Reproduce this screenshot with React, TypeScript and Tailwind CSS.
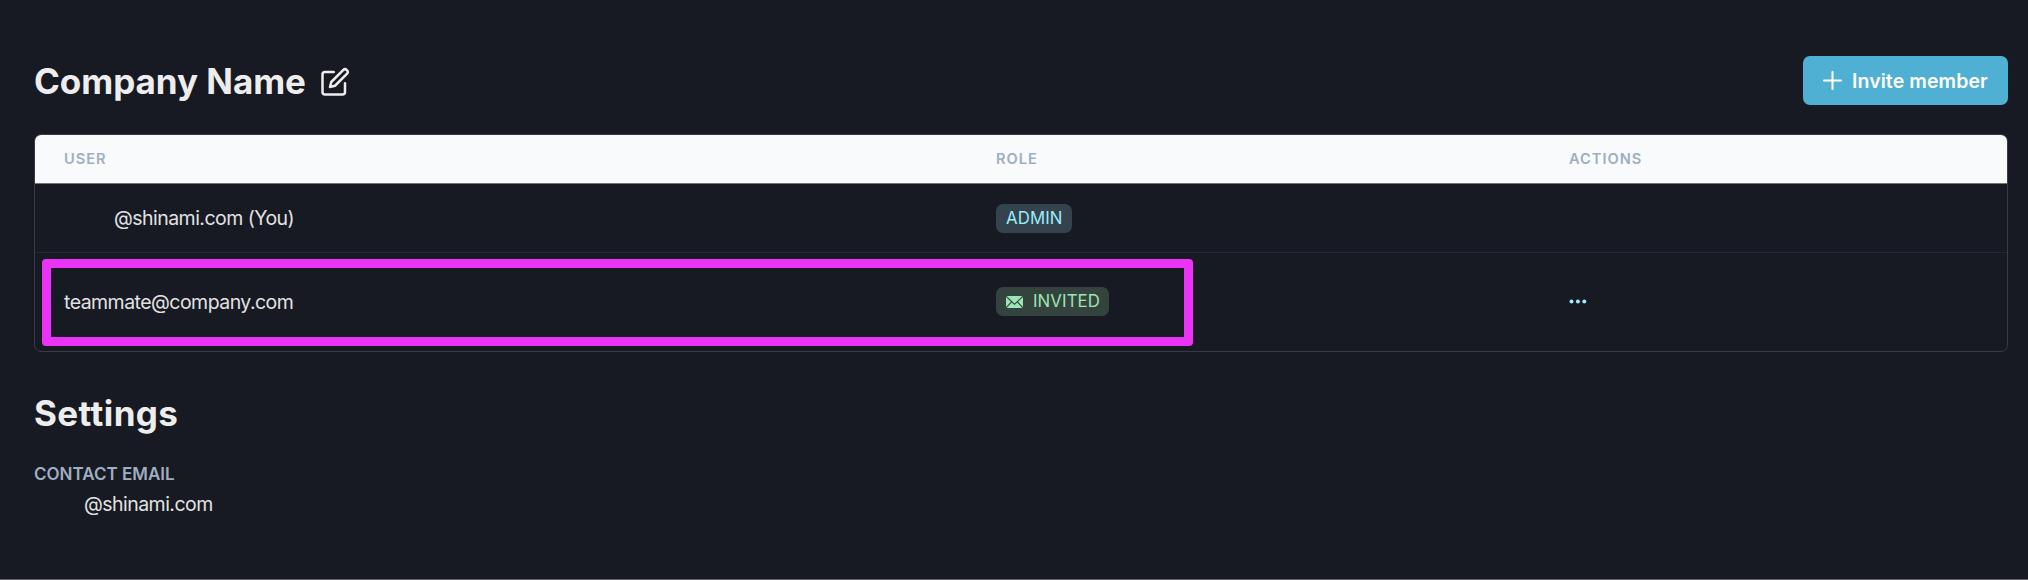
import React from 'react';
import { FiEdit } from 'react-icons/fi';
import { Plus } from 'lucide-react';

interface Member {
  email: string;
  role: 'ADMIN' | 'INVITED';
  self?: boolean;
}

const members: Member[] = [
  { email: '@shinami.com', role: 'ADMIN', self: true },
  { email: 'teammate@company.com', role: 'INVITED' }
];

const EnvelopeIcon: React.FC = () => (
  <svg viewBox="0 0 17 12" className="w-[17px] h-3 mr-[10px]" fill="currentColor">
    <path d="M0.6 0h15.8L8.5 7.6z" />
    <path d="M0 0.9L5 5.8L0 10.9z" />
    <path d="M17 0.9L12 5.8L17 10.9z" />
    <path d="M5.8 6.5L8.5 9.1L11.2 6.5L16.4 12H0.6z" />
  </svg>
);

const RoleBadge: React.FC<{ role: Member['role'] }> = ({ role }) => (
  <span
    className={`inline-flex items-center h-[29px] pl-[10px] rounded-[7px] text-[16.8px] tracking-[0.1px] whitespace-nowrap ${
      role === 'ADMIN' ? 'w-[76px] pt-px bg-[#34434e] text-[#9decf9]' : 'w-[113px] bg-[#35433f] text-[#9ae6b4]'
    }`}
  >
    {role === 'INVITED' && <EnvelopeIcon />}
    {role}
  </span>
);

const App: React.FC = () => {
  return (
    <div className="h-[580px] w-full bg-[#171923] text-[#ededed] font-['Inter',sans-serif] border-b border-[#67656e] pl-[34px] pr-5 pt-14">
      <div className="flex justify-between items-center h-[49px]">
        <div className="flex items-center gap-[14px] pt-[2px]">
          <h1 className="text-[35px] leading-[49px] font-bold tracking-[-0.04px]">Company Name</h1>
          <FiEdit size={30} />
        </div>
        <button className="flex items-center gap-[5px] w-[205px] h-[49px] pl-[15px] rounded-[7px] bg-[#50b0d3] text-white text-[19.5px] font-semibold tracking-[0.08px] whitespace-nowrap">
          <Plus size={29} strokeWidth={1.7} />
          <span className="pt-[2px]">Invite member</span>
        </button>
      </div>

      <div className="relative mt-[29px] h-[218px] border border-[#3a3c45] rounded-[7px] overflow-hidden">
        <div className="grid grid-cols-[932px_573px_1fr] items-center h-[49px] pl-[29px] pt-px bg-[#f9fafc] border-b border-[#72747d] text-[#a0aec0] text-[14.6px] font-semibold tracking-[1px]">
          <span>USER</span>
          <span>ROLE</span>
          <span>ACTIONS</span>
        </div>
        {members.map((m) => (
          <div
            key={m.email}
            className={`grid grid-cols-[932px_573px_1fr] items-center pl-[29px] text-[19.5px] text-[#e2e2e3] ${m.self ? 'h-[69px] border-b border-[#262833]' : 'h-[98px] pb-px'}`}
          >
            <span className={`pt-[2px] tracking-[-0.54px] ${m.self ? 'pl-[50px]' : ''}`}>
              {m.email}{m.self && ' (You)'}
            </span>
            <span className="flex"><RoleBadge role={m.role} /></span>
            {!m.self && (
              <button className="flex text-[#9decf9]" aria-label="Actions">
                <svg viewBox="0 0 18 5" className="w-[18px] h-[5px]" fill="currentColor">
                  <circle cx="2.5" cy="2.5" r="2" />
                  <circle cx="8.9" cy="2.5" r="2" />
                  <circle cx="15.3" cy="2.5" r="2" />
                </svg>
              </button>
            )}
          </div>
        ))}
        <div className="absolute left-[7px] top-[124px] w-[1151px] h-[87px] border-[9px] border-[#ea33f7] rounded-[4px]" />
      </div>

      <h2 className="mt-[37px] text-[35px] leading-[49px] font-bold tracking-[0.4px]">Settings</h2>
      <p className="mt-[21px] text-[17px] leading-[30px] font-semibold text-[#a0aec0]">CONTACT EMAIL</p>
      <p className="pl-[50px] text-[19.5px] leading-[30px] tracking-[-0.54px] text-[#e2e2e3]">@shinami.com</p>
    </div>
  );
};

export default App;
